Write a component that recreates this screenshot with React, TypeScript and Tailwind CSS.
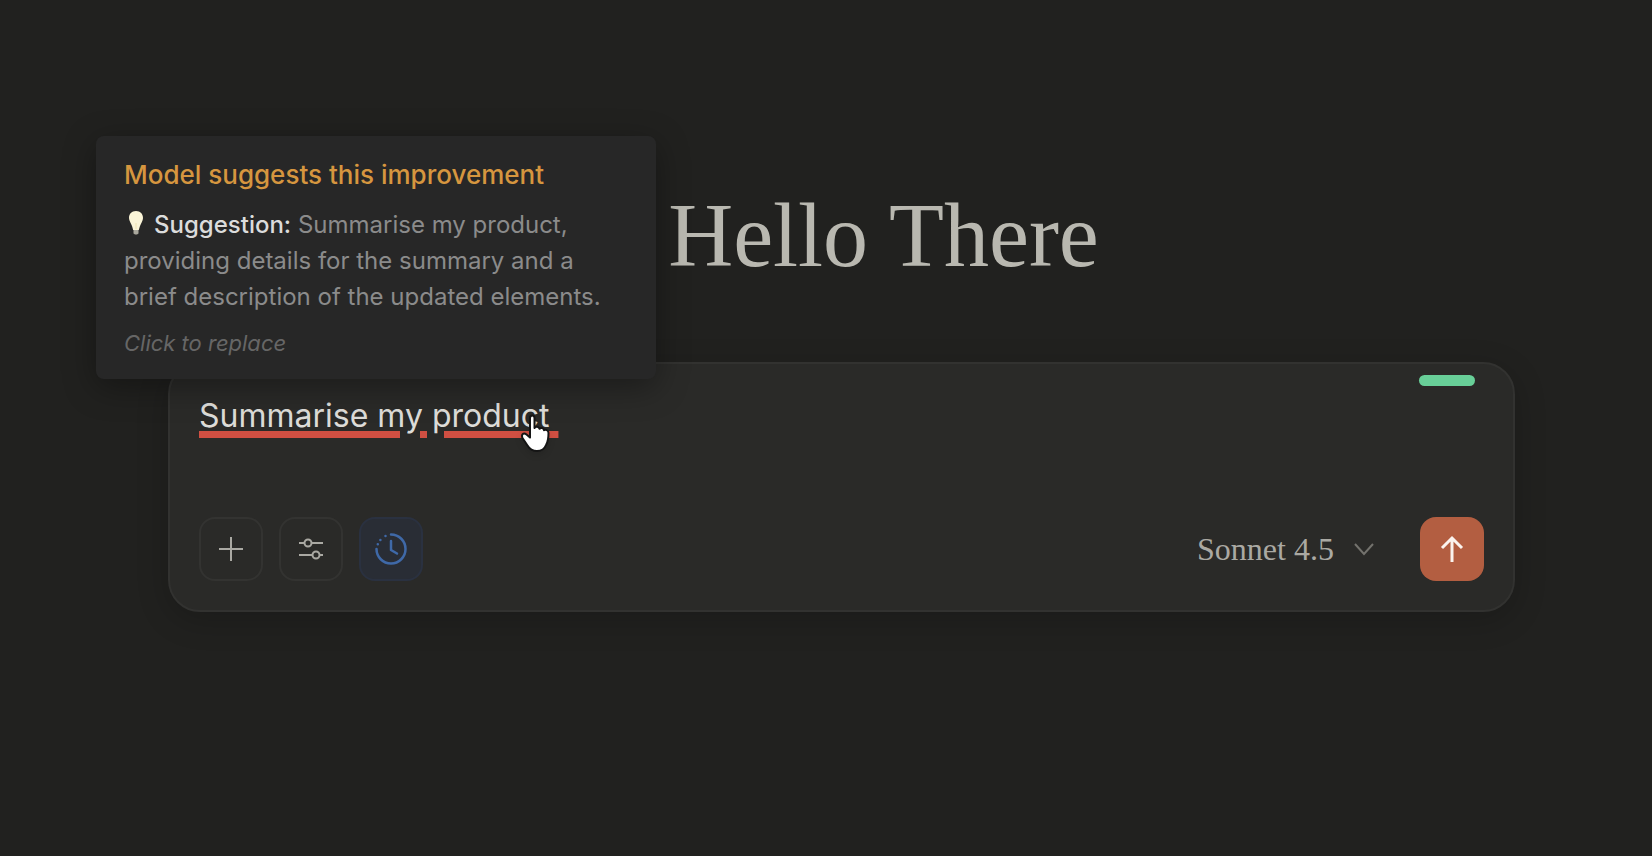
import { useState } from "react";

const SUGGESTION =
  "Summarise my product, providing details for the summary and a brief description of the updated elements.";

const MODELS = ["Sonnet 4.5"];

function PlusIcon() {
  return (
    <svg className="size-6" viewBox="0 0 24 24" fill="none" stroke="currentColor" strokeWidth="2">
      <path d="M12 0v24M0 12h24" />
    </svg>
  );
}

function SlidersIcon() {
  return (
    <svg className="size-6" viewBox="0 0 24 24" fill="none" stroke="currentColor" strokeWidth="2">
      <path d="M0 6h5.5M12.500 6H24M0 18h13.500M20.500 18H24" />
      <circle cx="9" cy="6" r="3.500" />
      <circle cx="17" cy="18" r="3.500" />
    </svg>
  );
}

function ClockIcon() {
  return (
    <svg
      className="size-8"
      viewBox="0 0 32 32"
      fill="none"
      stroke="currentColor"
      strokeWidth="2.500"
      strokeLinecap="round"
      strokeLinejoin="round"
    >
      <path d="M16 1.500A14.500 14.500 0 1 1 1.500 16" />
      <path d="M2.800 11.200v0M5.400 7v0M10.500 3v0" />
      <path d="M16 8v9l6 3.500" />
    </svg>
  );
}

function BulbIcon() {
  return (
    <svg className="inline-block h-6 w-4" viewBox="0 0 16 24">
      <path
        d="M8 0C3.500 0 1 3 1 7c0 3 2 5 3 8 .6 1.800.8 3 1.200 4h5.600c.4-1 .6-2.200 1.200-4 1-3 3-5 3-8 0-4-2.500-7-7-7z"
        fill="#fbf5d8"
      />
      <path d="M8 12v6" fill="none" stroke="#efe3b4" />
      <path d="M5.500 19h5v3.500l-1.500 1h-2l-1.500-1z" fill="#a9a79c" />
    </svg>
  );
}

function HandCursor() {
  return (
    <svg
      className="pointer-events-none absolute top-12 left-[349px] h-[42px] w-8 drop-shadow-md"
      viewBox="0 0 32 42"
    >
      <path
        d="M11 6c0-3.500 4.500-3.500 4.500 0v10c1-2 4.500-1.500 5 .8 1.300-1.600 4.300-.9 4.500 1.400 1.800-1 4.500.2 4.500 2.800 0 5-.3 8-2.200 11.500C25.500 37 22.500 39 18 39c-4.500 0-7.500-2-9.500-5.500L3.500 26C2 22.500 4.500 20 7.500 22.500L11 25.500z"
        fill="#fff"
        stroke="#151515"
        strokeWidth="2"
        strokeLinejoin="round"
      />
    </svg>
  );
}

interface TooltipProps {
  onReplace: () => void;
}

function SuggestionTooltip({ onReplace }: TooltipProps) {
  return (
    <button
      onClick={onReplace}
      className="absolute bottom-[calc(100%-15px)] -left-[74px] z-10 w-[560px] cursor-pointer rounded-lg bg-[#272727] px-7 pt-[23px] pb-5 text-left font-['Inter',sans-serif] shadow-[0_8px_32px_rgba(0,0,0,0.35)]"
    >
      <strong className="block text-[26px] leading-8 font-medium text-[#d6963f]">
        Model suggests this improvement
      </strong>
      <span className="mt-4 block text-2xl leading-9 text-[#8b8b8b]">
        <span className="mr-2.5 ml-1 inline-flex align-[-2px]">
          <BulbIcon />
        </span>
        <span className="font-medium text-[#dcdcdc]">Suggestion:</span> {SUGGESTION}
      </span>
      <em className="mt-3 block text-[22px] leading-8 text-[#666]">Click to replace</em>
    </button>
  );
}

export default function App() {
  const [text, setText] = useState("Summarise my product ");

  return (
    <div className="min-h-screen bg-[#21211f] pt-48 pr-[137px] pb-12 pl-[168px]">
      <h1 className="pl-[84px] text-center font-['Liberation_Serif',serif] text-[90px] leading-[88px] text-[#b9b8b0]">
        Hello There
      </h1>

      <div className="relative mt-[82px] rounded-[32px] border-2 border-[#323230] bg-[#2a2a28] px-[29px] pt-7 pb-[29px] shadow-[0_8px_32px_rgba(0,0,0,0.2)]">
        <SuggestionTooltip onReplace={() => setText(SUGGESTION)} />
        <span className="absolute top-[11px] right-[38px] h-[11px] w-14 rounded-full bg-[#68cf98]" />

        <textarea
          aria-label="Prompt"
          value={text}
          onChange={e => setText(e.target.value)}
          spellCheck={false}
          className="block h-[125px] w-full resize-none bg-transparent pt-1 font-['Inter',sans-serif] text-[32px] leading-10 text-[#dddcd8] underline decoration-[#d04f42] decoration-[7px] underline-offset-[4px] outline-none"
        />
        <HandCursor />

        <div className="flex items-center gap-4">
          <button
            aria-label="Add"
            className="flex size-16 items-center justify-center rounded-2xl border-2 border-[#333331] text-[#aaa9a3]"
          >
            <PlusIcon />
          </button>
          <button
            aria-label="Tools"
            className="flex size-16 items-center justify-center rounded-2xl border-2 border-[#333331] text-[#aaa9a3]"
          >
            <SlidersIcon />
          </button>
          <button
            aria-label="Extended thinking"
            className="flex size-16 items-center justify-center rounded-2xl border-2 border-[#2a3140] bg-[#292d35] text-[#3f69a8]"
          >
            <ClockIcon />
          </button>

          <div className="relative mr-[30px] ml-auto text-[#aaa9a3]">
            <select
              aria-label="Model"
              className="appearance-none bg-transparent pr-10 font-['Liberation_Serif',serif] text-[32px] leading-10 outline-none"
            >
              {MODELS.map(m => (
                <option key={m}>{m}</option>
              ))}
            </select>
            <svg
              className="pointer-events-none absolute top-3.5 right-0 h-3.5 w-5"
              viewBox="0 0 20 14"
              fill="none"
              stroke="#73726d"
              strokeWidth="2"
            >
              <path d="M1 1l9 10 9-10" />
            </svg>
          </div>
          <button
            aria-label="Send"
            className="flex size-16 items-center justify-center rounded-2xl bg-[#b35e41] text-[#fbf3ee]"
          >
            <svg
              className="size-7"
              viewBox="0 0 28 28"
              fill="none"
              stroke="currentColor"
              strokeWidth="3"
            >
              <path d="M14 27V3M4 13L14 3 24 13" />
            </svg>
          </button>
        </div>
      </div>
    </div>
  );
}
